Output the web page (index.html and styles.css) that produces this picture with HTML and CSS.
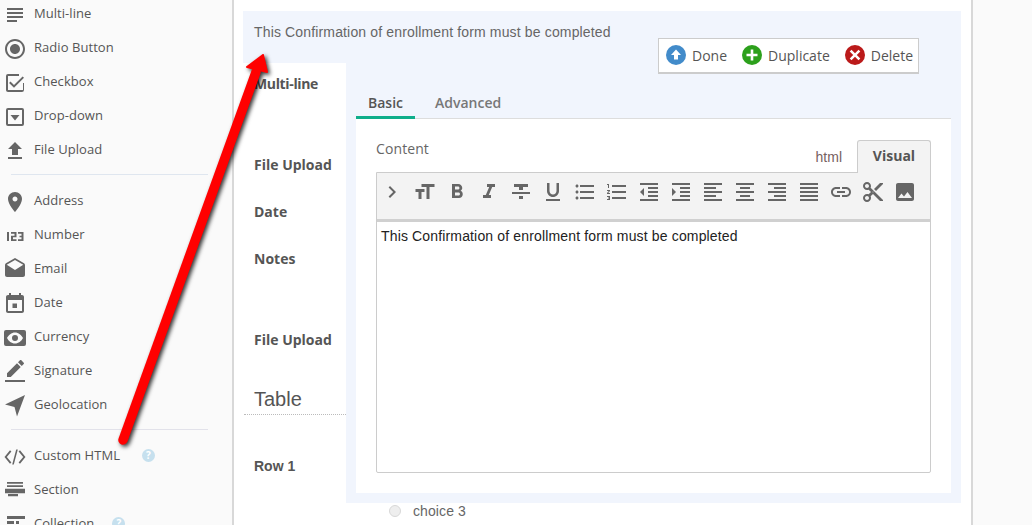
FILE: index.html
```html
<!DOCTYPE html>
<html lang="en">
<head>
<meta charset="utf-8">
<title>Form builder</title>
<link rel="stylesheet" href="styles.css">
</head>
<body>
<div class="page">
  <aside class="sidebar">
    <ul class="fields first">
      <li><svg class="ico" viewBox="0 0 24 24"><path d="M14 17H4v2h10v-2zm6-8H4v2h16V9zM4 15h16v-2H4v2zM4 5v2h16V5H4z"/></svg>Multi-line</li>
      <li><svg class="ico" viewBox="0 0 24 24"><path d="M12 7c-2.76 0-5 2.24-5 5s2.24 5 5 5 5-2.24 5-5-2.24-5-5-5zm0-5C6.48 2 2 6.48 2 12s4.48 10 10 10 10-4.48 10-10S17.52 2 12 2zm0 18c-4.42 0-8-3.58-8-8s3.58-8 8-8 8 3.58 8 8-3.58 8-8 8z"/></svg>Radio Button</li>
      <li><svg class="ico" viewBox="0 0 24 24"><path d="M20 12v7H5V5h11V3H5a2 2 0 0 0-2 2v14c0 1.1.9 2 2 2h14a2 2 0 0 0 2-2v-7h-1zM7.5 10.5 6.1 11.900 11 16.800 21 6.800 19.600 5.400 11 14z"/></svg>Checkbox</li>
      <li><svg class="ico" viewBox="0 0 24 24"><path d="M19 3H5a2 2 0 0 0-2 2v14a2 2 0 0 0 2 2h14a2 2 0 0 0 2-2V5a2 2 0 0 0-2-2zm0 16H5V5h14v14zM7.500 10h9L12 15.500z"/></svg>Drop-down</li>
      <li><svg class="ico" viewBox="0 0 24 24"><path d="M9 16h6v-6h4l-7-7-7 7h4zm-4 2h14v2H5z"/></svg>File Upload</li>
    </ul>
    <hr class="divider">
    <ul class="fields">
      <li><svg class="ico" viewBox="0 0 24 24"><path d="M12 2C8.130 2 5 5.130 5 9c0 5.250 7 13 7 13s7-7.750 7-13c0-3.870-3.130-7-7-7zm0 9.500c-1.380 0-2.500-1.120-2.500-2.500s1.120-2.500 2.500-2.500 2.500 1.120 2.500 2.500-1.120 2.500-2.500 2.500z"/></svg>Address</li>
      <li><svg class="ico" viewBox="0 0 24 24"><path d="M4 8h2v9H4zM8 8h5.500v5.300H10v2h3.500V17H8v-5.300h3.500V9.700H8zM15 8h5.500v9H15v-1.700h3.500v-2H16.500v-1.600h2v-2H15z"/></svg>Number</li>
      <li><svg class="ico up1" viewBox="0 0 24 24"><path d="M21.990 8c0-.720-.370-1.350-.940-1.700L12 1 2.950 6.300C2.380 6.650 2 7.280 2 8v10c0 1.100.900 2 2 2h16c1.100 0 2-.900 2-2l-.010-10zM12 13 3.740 7.840 12 3l8.260 4.840L12 13z"/></svg>Email</li>
      <li><svg class="ico" viewBox="0 0 24 24"><path d="M14 11.500H9.500V16H14zM16 1v2H8V1H6v2H5c-1.110 0-1.990.900-1.990 2L3 19c0 1.100.890 2 2 2h14c1.100 0 2-.900 2-2V5c0-1.100-.900-2-2-2h-1V1h-2zm3 18H5V8h14v11z"/></svg>Date</li>
      <li><svg class="ico" viewBox="0 0 24 24"><path fill-rule="evenodd" d="M3 4h18a2 2 0 0 1 2 2v12a2 2 0 0 1-2 2H3a2 2 0 0 1-2-2V6a2 2 0 0 1 2-2zm9 2.500c-3.500 0-6.500 2.500-8 5.500 1.500 3 4.500 5.500 8 5.500s6.500-2.500 8-5.500c-1.500-3-4.500-5.500-8-5.500zm0 2.500a3 3 0 1 1 0 6 3 3 0 0 1 0-6z"/></svg>Currency</li>
      <li><svg class="ico" viewBox="0 0 24 24"><path d="M17.750 7 14 3.250l-10 10V17h3.750l10-10zm2.960-2.960c.390-.390.390-1.020 0-1.410L18.370.290c-.390-.390-1.020-.390-1.410 0L15 2.250 18.750 6l1.960-1.960zM2 20h20v2H2z"/></svg>Signature</li>
      <li><svg class="ico up1" viewBox="0 0 24 24"><path d="M22 2 2 11.500l9.500 2.500 2.500 9.500z"/></svg>Geolocation</li>
    </ul>
    <hr class="divider second">
    <ul class="fields">
      <li><svg class="ico" viewBox="0 0 24 24"><path d="M8.400 17.600 3.800 12l4.600-5.600L7 5.300 1.500 12 7 18.700zm7.200 0 4.600-5.600-4.600-5.600L17 5.300l5.500 6.700-5.500 6.700zM13.200 4.500h1.600l-4 15H9.200z"/></svg>Custom HTML<span class="help">?</span></li>
      <li><svg class="ico" viewBox="0 0 24 24"><path d="M4 3h16v1.700H4zM4 6.300h16V8H4zM2 9.700h20v4.600H2zM5 15h10v2.300H5z"/></svg>Section</li>
      <li><svg class="ico" viewBox="0 0 24 24"><path d="M4 3h18v3H4zM4 8h7v3H4zM13 8h3v3h-3zM4 13h18v6H4z"/></svg>Collection<span class="help near">?</span></li>
    </ul>
  </aside>

  <main class="main">
    <section class="editor-card">
      <header class="card-head">
        <p class="desc">This Confirmation of enrollment form must be completed</p>
        <div class="actions">
          <span class="action"><svg class="circle" viewBox="0 0 20 20"><circle cx="10" cy="10" r="10" fill="#428bca"/><path fill="#fff" d="M10 4.500 15 10h-3v4.500H8V10H5z"/></svg>Done</span>
          <span class="action"><svg class="circle" viewBox="0 0 20 20"><circle cx="10" cy="10" r="10" fill="#2ca01c"/><path fill="#fff" d="M8.700 4.500h2.600v4.200h4.200v2.600h-4.200v4.200H8.700v-4.200H4.500V8.700h4.200z"/></svg>Duplicate</span>
          <span class="action"><svg class="circle" viewBox="0 0 20 20"><circle cx="10" cy="10" r="10" fill="#bb1a1a"/><path fill="#fff" d="m6.500 4.700 3.500 3.500 3.500-3.500 1.800 1.800-3.500 3.500 3.500 3.500-1.800 1.800-3.500-3.500-3.500 3.500-1.800-1.800 3.500-3.500-3.500-3.500z"/></svg>Delete</span>
        </div>
      </header>
      <div class="card-body">
        <div class="labels">
          <div class="lbl l-multi">Multi-line</div>
          <div class="lbl l-upload">File Upload</div>
          <div class="lbl l-date">Date</div>
          <div class="lbl l-notes">Notes</div>
          <div class="lbl l-upload2">File Upload</div>
          <div class="table-title">Table</div>
          <div class="row-lbl">Row 1</div>
        </div>
        <div class="settings">
          <nav class="tabs"><span class="tab active">Basic</span><span class="tab">Advanced</span></nav>
          <div class="panel">
            <div class="content-head">
              <span class="content-title">Content</span>
              <span class="mode">html</span>
              <span class="mode visual">Visual</span>
            </div>
            <div class="rte">
              <div class="toolbar">
                <svg viewBox="0 0 24 24"><path d="M8.590 16.590 13.170 12 8.590 7.410 10 6l6 6-6 6z"/></svg>
                <svg viewBox="0 0 24 24"><path d="M8.500 4v3h5v12h3V7h5V4zM2.500 9v3h3v7h3v-7h3V9z"/></svg>
                <svg viewBox="0 0 24 24"><path d="M15.600 10.790c.970-.670 1.650-1.770 1.650-2.790 0-2.260-1.750-4-4-4H7v14h7.040c2.090 0 3.710-1.700 3.710-3.790 0-1.520-.860-2.820-2.150-3.420zM10 6.500h3c.830 0 1.500.670 1.500 1.500s-.670 1.500-1.500 1.500h-3v-3zm3.500 9H10v-3h3.500c.830 0 1.500.670 1.500 1.500s-.670 1.500-1.500 1.500z"/></svg>
                <svg viewBox="0 0 24 24"><path d="M10 4v3h2.210l-3.420 8H6v3h8v-3h-2.210l3.420-8H18V4z"/></svg>
                <svg viewBox="0 0 24 24"><path d="M10 19h4v-3h-4v3zM5 4v3h5v3h4V7h5V4H5zM3 14h18v-2H3v2z"/></svg>
                <svg viewBox="0 0 24 24"><path d="M12 17c3.310 0 6-2.690 6-6V3h-2.500v8c0 1.930-1.570 3.500-3.500 3.500S8.500 12.930 8.500 11V3H6v8c0 3.310 2.690 6 6 6zm-7 2v2h14v-2H5z"/></svg>
                <svg viewBox="0 0 24 24"><path d="M4 10.500c-.830 0-1.500.670-1.500 1.500s.670 1.500 1.500 1.500 1.500-.670 1.500-1.500-.670-1.500-1.500-1.500zm0-6c-.830 0-1.500.670-1.500 1.500S3.170 7.500 4 7.500 5.500 6.830 5.500 6 4.830 4.500 4 4.500zm0 12c-.830 0-1.500.680-1.500 1.500s.680 1.500 1.500 1.500 1.500-.680 1.500-1.500-.670-1.500-1.500-1.500zM7 19h14v-2H7v2zm0-6h14v-2H7v2zm0-8v2h14V5H7z"/></svg>
                <svg viewBox="0 0 24 24"><path d="M2 17h2v.500H3v1h1v.500H2v1h3v-4H2v1zm1-9h1V4H2v1h1v3zm-1 3h1.800L2 13.100v.900h3v-1H3.200L5 10.900V10H2v1zm5-6v2h14V5H7zm0 14h14v-2H7v2zm0-6h14v-2H7v2z"/></svg>
                <svg viewBox="0 0 24 24"><path d="M11 17h10v-2H11v2zm-8-5 4 4V8l-4 4zm0 9h18v-2H3v2zM3 3v2h18V3H3zm8 6h10V7H11v2zm0 4h10v-2H11v2z"/></svg>
                <svg viewBox="0 0 24 24"><path d="M3 21h18v-2H3v2zM3 8v8l4-4-4-4zm8 9h10v-2H11v2zM3 3v2h18V3H3zm8 6h10V7H11v2zm0 4h10v-2H11v2z"/></svg>
                <svg viewBox="0 0 24 24"><path d="M15 15H3v2h12v-2zm0-8H3v2h12V7zM3 13h18v-2H3v2zm0 8h18v-2H3v2zM3 3v2h18V3H3z"/></svg>
                <svg viewBox="0 0 24 24"><path d="M7 15v2h10v-2H7zm-4 6h18v-2H3v2zm0-8h18v-2H3v2zm4-6v2h10V7H7zM3 3v2h18V3H3z"/></svg>
                <svg viewBox="0 0 24 24"><path d="M3 21h18v-2H3v2zm6-4h12v-2H9v2zm-6-4h18v-2H3v2zm6-4h12V7H9v2zM3 3v2h18V3H3z"/></svg>
                <svg viewBox="0 0 24 24"><path d="M3 21h18v-2H3v2zm0-4h18v-2H3v2zm0-4h18v-2H3v2zm0-4h18V7H3v2zm0-6v2h18V3H3z"/></svg>
                <svg viewBox="0 0 24 24"><path d="M3.900 12c0-1.710 1.390-3.100 3.100-3.100h4V7H7c-2.760 0-5 2.240-5 5s2.240 5 5 5h4v-1.900H7c-1.710 0-3.100-1.390-3.100-3.100zM8 13h8v-2H8v2zm9-6h-4v1.900h4c1.710 0 3.100 1.390 3.100 3.100s-1.390 3.100-3.100 3.100h-4V17h4c2.760 0 5-2.240 5-5s-2.240-5-5-5z"/></svg>
                <svg viewBox="0 0 24 24"><path d="M9.640 7.640c.230-.500.360-1.050.360-1.640 0-2.210-1.790-4-4-4S2 3.790 2 6s1.790 4 4 4c.590 0 1.140-.130 1.640-.360L10 12l-2.360 2.360C7.140 14.130 6.590 14 6 14c-2.210 0-4 1.790-4 4s1.790 4 4 4 4-1.790 4-4c0-.590-.130-1.140-.360-1.640L12 14l7 7h3v-1L9.640 7.640zM6 8c-1.100 0-2-.890-2-2s.900-2 2-2 2 .890 2 2-.900 2-2 2zm0 12c-1.100 0-2-.890-2-2s.900-2 2-2 2 .890 2 2-.900 2-2 2zm6-7.500c-.280 0-.500-.220-.500-.500s.220-.500.500-.500.500.220.500.500-.220.500-.500.500zM19 3l-6 6 2 2 7-7V3z"/></svg>
                <svg viewBox="0 0 24 24"><path d="M21 19V5c0-1.100-.900-2-2-2H5c-1.100 0-2 .900-2 2v14c0 1.100.900 2 2 2h14c1.100 0 2-.900 2-2zM8.500 13.500l2.500 3.010L14.500 12l4.500 6H5l3.500-4.500z"/></svg>
              </div>
              <div class="rte-text">This Confirmation of enrollment form must be completed</div>
            </div>
          </div>
        </div>
      </div>
    </section>
    <div class="choice"><span class="radio"></span>choice 3</div>
  </main>
  <div class="rail"></div>
</div>
<svg class="arrow" viewBox="0 0 1032 525" aria-hidden="true">
  <path class="arrow-shaft" d="M123 440 256 72"/>
  <path class="arrow-head" d="M263 55 247 67 267 72z"/>
</svg>
</body>
</html>
```
FILE: styles.css
```css
* { box-sizing: border-box; }
html, body { margin: 0; height: 525px; overflow: hidden; background: #fff; }
body { font-family: "Open Sans", "Liberation Sans", sans-serif; color: #555; position: relative; }

.page { display: flex; height: 525px; overflow: hidden; }

.sidebar { flex: 0 0 234px; background: #fafafa; border-right: 2px solid #d8d8d8; overflow: hidden; }
.fields { list-style: none; margin: 0; padding: 0; }
.fields.first { margin-top: -4px; }
.fields li { display: flex; align-items: center; height: 34px; padding-left: 3px; font-size: 13px; letter-spacing: .05px; color: #555; }
.ico { width: 24px; height: 24px; flex: none; margin: 4px 7px 0 0; fill: #666; }
.ico.up1 { margin-top: 2px; }
.help { width: 13px; height: 13px; margin-left: 22px; margin-top: 1px; border-radius: 50%; background: #c6e0ee; color: #fff; font-size: 10px; font-weight: 700; line-height: 13px; text-align: center; letter-spacing: 0; }
.help.near { margin-left: 18px; }
.divider { height: 1px; margin: 8px 24px 8px 11px; border: 0; background: #dfe6ef; }
.divider.second { background: #e2e2ea; }

.main { flex: 0 0 737px; padding: 11px 10px 0 9px; background: #fff; }
.editor-card { width: 718px; }
.card-head { height: 52px; position: relative; background: #f1f5fd; padding: 13px 11px 0; }
.desc { margin: 0; font: 14px/16px "Liberation Sans", Arial, sans-serif; letter-spacing: .15px; color: #666; }
.actions { position: absolute; left: 415px; top: 27px; width: 261px; height: 36px; display: flex; align-items: center; padding: 0 0 1px 7px; background: #fff; border: 1px solid #ccc; border-bottom-width: 2px; font-size: 14px; color: #555; white-space: nowrap; }
.action { display: flex; align-items: center; margin-right: 15px; }
.action:last-child { margin-right: 0; }
.circle { width: 20px; height: 20px; margin-right: 6px; flex: none; }

.card-body { display: flex; height: 440px; }
.labels { flex: 0 0 103px; background: #fff; font-size: 14px; }
.lbl { font-weight: 700; line-height: 18px; padding-left: 11px; color: #555; white-space: nowrap; }
.l-multi { margin-top: 12px; letter-spacing: -.35px; }
.l-upload { margin-top: 63px; }
.l-date { margin-top: 29px; }
.l-notes { margin-top: 29px; }
.l-upload2 { margin-top: 63px; }
.table-title { margin: 38px 0 0 1px; height: 28px; padding-left: 10px; font: 20px/24px "Liberation Sans", Arial, sans-serif; color: #555; border-bottom: 1px dotted #bbb; }
.row-lbl { margin-top: 42px; padding-left: 11px; font: 700 14px/18px "Liberation Sans", Arial, sans-serif; color: #555; }

.settings { flex: 1; background: #f1f5fd; padding: 0 10px 10px; display: flex; flex-direction: column; }
.tabs { display: flex; height: 56px; align-items: flex-end; border-bottom: 1px solid #ddd; flex: none; }
.tab { height: 29px; padding: 0 12px; margin-right: 8px; font-size: 14px; line-height: 28px; color: #777; font-weight: 600; }
.tab.active { height: 30px; margin-bottom: -1px; border-bottom: 3px solid #0fae8b; color: #555; }
.panel { flex: 1; background: #fff; padding: 20px; }
.content-head { display: flex; align-items: flex-end; height: 33px; font-size: 14px; }
.content-title { margin-right: auto; align-self: flex-start; line-height: 19px; letter-spacing: .1px; color: #666; }
.mode { margin-right: 15px; color: #77615f; font: 14px/30px "Liberation Sans", Arial, sans-serif; }
.mode.visual { width: 74px; height: 33px; margin: 0 0 -1px; background: #f3f3f3; border: 1px solid #ccc; border-bottom: 0; border-radius: 3px 3px 0 0; font: 700 14px/30px "Open Sans", sans-serif; text-align: center; color: #555; }
.rte { width: 555px; height: 301px; border: 1px solid #ccc; border-radius: 0 0 2px 2px; display: flex; flex-direction: column; }
.toolbar { display: flex; align-items: flex-start; flex: none; height: 49px; padding-top: 7px; background: #f3f3f3; border-bottom: 3px solid #d0d0d0; }
.toolbar svg { flex: 0 0 24px; width: 24px; height: 24px; margin: 0 4px; fill: #666; }
.toolbar svg:first-child { margin: 0 5px 0 3px; }
.rte-text { padding: 5px 4px; font: 14px/18px "Liberation Sans", Arial, sans-serif; letter-spacing: .15px; color: #222; }

.choice { display: flex; align-items: center; margin: 0 0 0 146px; font: 14px/16px "Liberation Sans", Arial, sans-serif; letter-spacing: .1px; color: #666; }
.radio { width: 12px; height: 12px; margin-right: 12px; border-radius: 50%; background: #eee; border: 1px solid #d8d8d8; }

.rail { flex: 1; background: #fafafa; border-left: 2px solid #d8d8d8; }

.arrow { position: absolute; left: 0; top: 0; width: 1032px; height: 525px; pointer-events: none; filter: drop-shadow(2px 2px 2px rgba(0,0,0,.8)); }
.arrow-shaft { fill: none; stroke: #f00; stroke-width: 9.500; stroke-linecap: round; }
.arrow-head { fill: #f00; stroke: #f00; stroke-width: 2; stroke-linejoin: round; }
```
